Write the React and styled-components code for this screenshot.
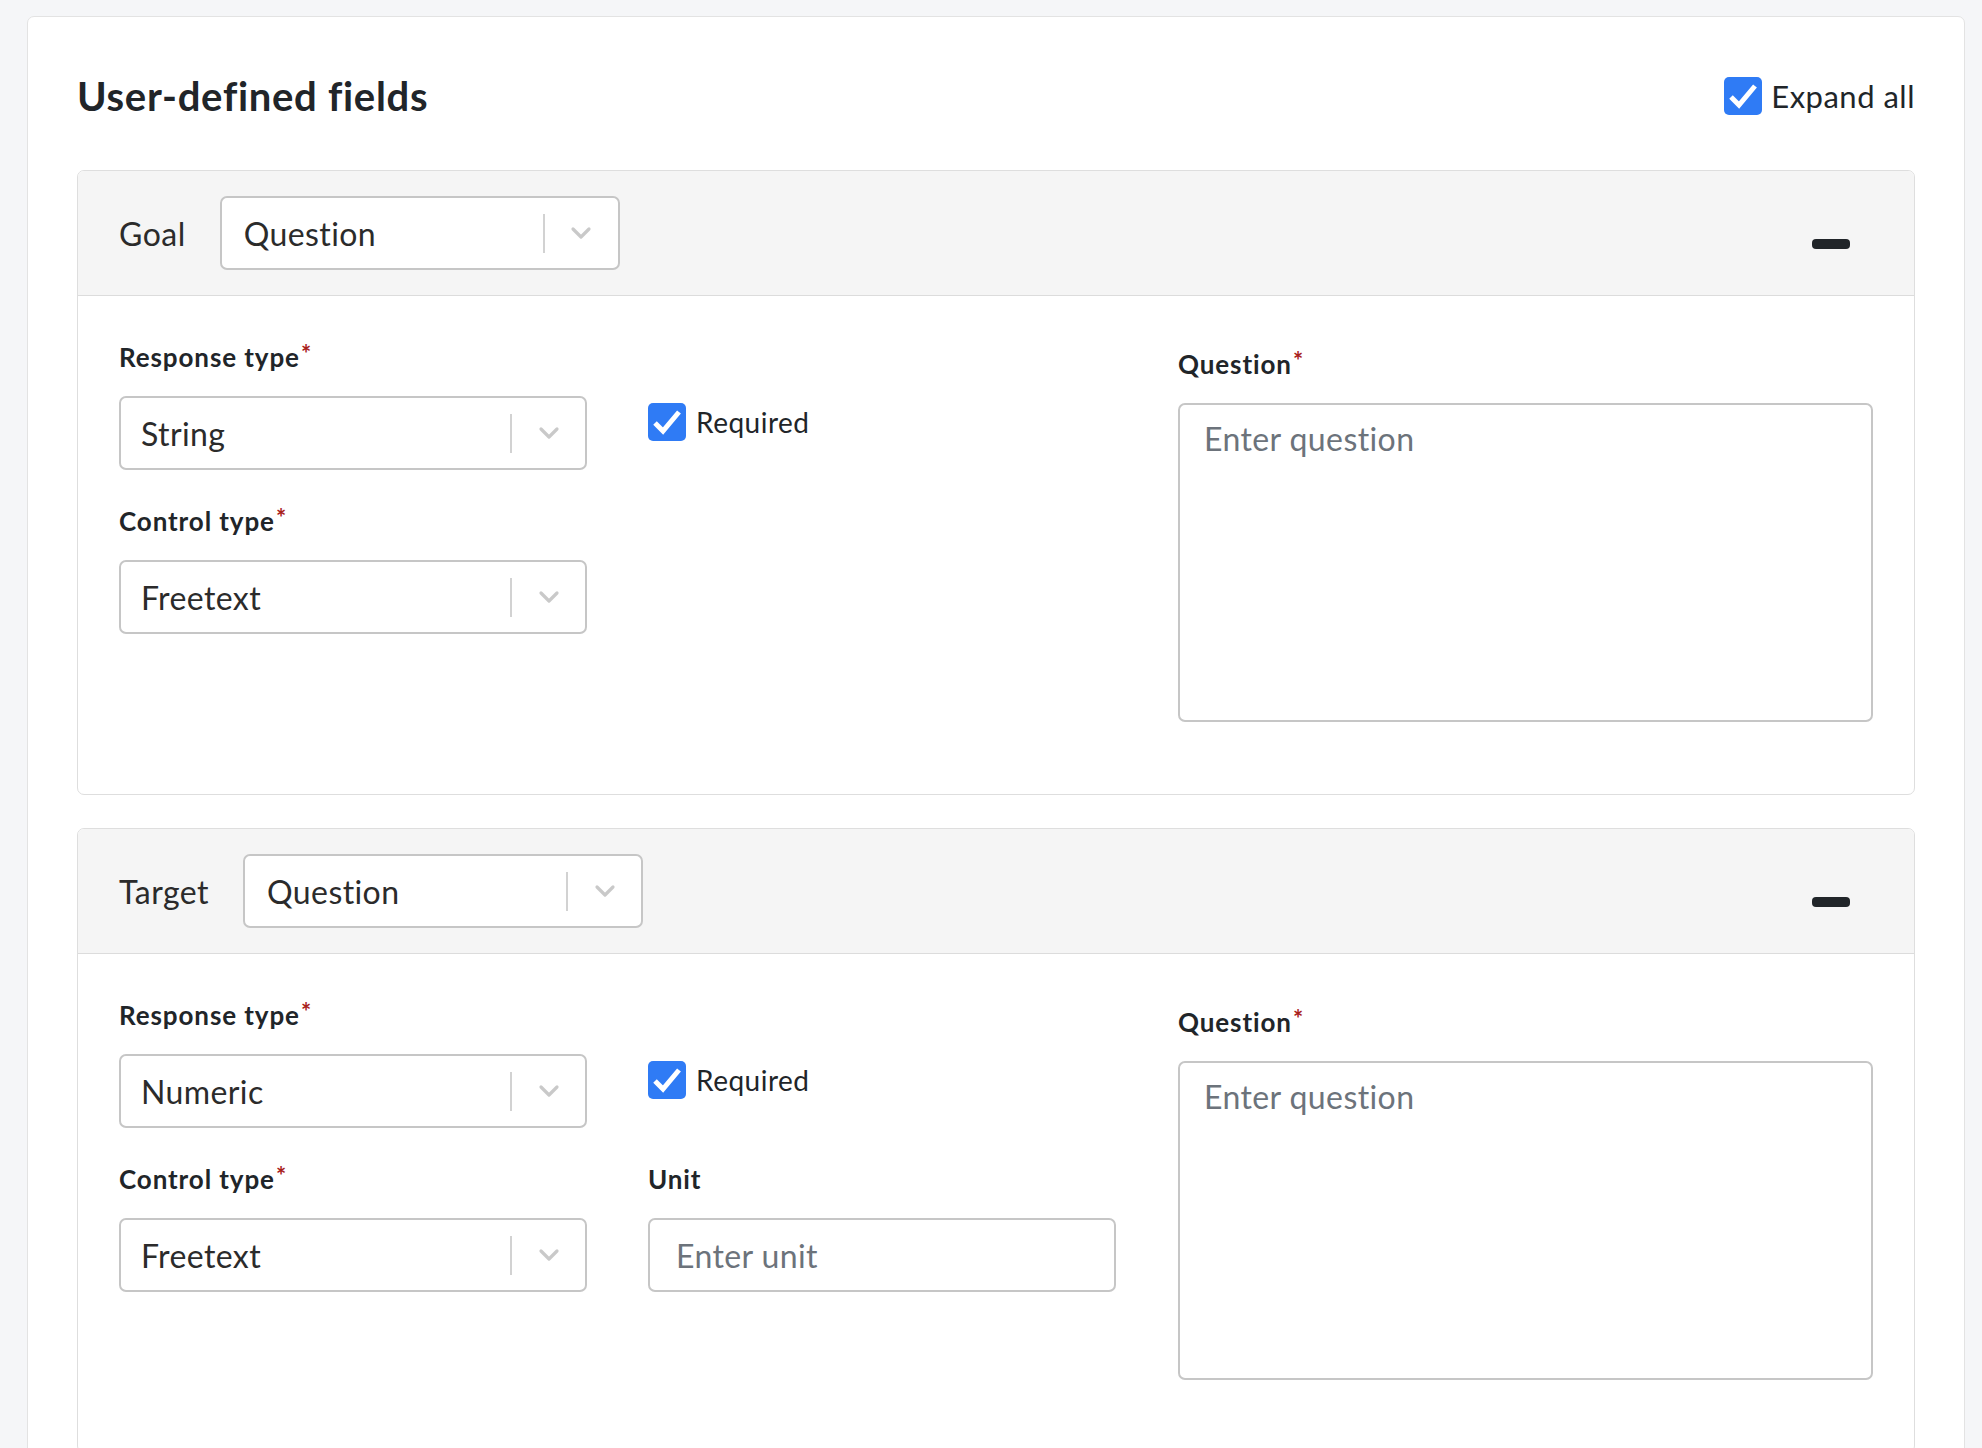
import React from "react";
import styled, { createGlobalStyle } from "styled-components";

const GlobalStyle = createGlobalStyle`
    html, body {
        margin: 0;
        padding: 0;
        background: #f5f6f8;
        font-family: Lato, "Liberation Sans", sans-serif;
        color: #212529;
    }
    * { box-sizing: border-box; }
`;

const Page = styled.div`
    padding: 16px 17px 0 27px;
    height: 1448px;
    overflow: hidden;
`;

const Card = styled.div`
    background: #fff;
    border: 1px solid #e3e3e3;
    border-radius: 7px;
    padding: 55px 49px 40px 49px;
    min-height: 1500px;
`;

const TopBar = styled.div`
    display: flex;
    align-items: center;
    justify-content: space-between;
    margin-bottom: 50px;
`;

const Title = styled.h1`
    margin: 0;
    font-size: 40px;
    line-height: 48px;
    font-weight: 700;
    color: #212529;
    letter-spacing: 0.7px;
`;

const CheckRow = styled.label`
    display: flex;
    align-items: center;
    gap: ${(p) => p.gap || 10}px;
    font-size: ${(p) => p.size || 28}px;
    letter-spacing: 0.5px;
    color: #212529;
    margin-right: ${(p) => p.right || 0}px;
    margin-top: ${(p) => p.top || 0}px;
`;

const Box = styled.span`
    display: inline-flex;
    width: 38px;
    height: 38px;
    border-radius: 5px;
    background: #2f7bf5;
    flex-shrink: 0;
`;

const Section = styled.div`
    border: 1px solid #dedede;
    border-radius: 7px;
    overflow: hidden;
    margin-bottom: 33px;
`;

const SectionHead = styled.div`
    display: flex;
    align-items: center;
    gap: 34px;
    background: #f5f5f5;
    border-bottom: 1px solid #dcdcdc;
    padding: 25px 64px 25px 41px;
`;

const HeadLabel = styled.span`
    font-size: 32px;
    letter-spacing: 0.5px;
    color: #2b2b2b;
`;

const Minus = styled.span`
    margin-left: auto;
    margin-top: 21px;
    width: 38px;
    height: 10px;
    border-radius: 4px;
    background: #212529;
`;

const SelectBox = styled.div`
    display: flex;
    align-items: center;
    width: ${(p) => p.width || 468}px;
    height: 74px;
    background: #fff;
    border: 2px solid #c6c6c6;
    border-radius: 7px;
    padding-left: ${(p) => p.pad || 20}px;
    font-size: 32px;
    letter-spacing: 0.4px;
    color: #2b2b2b;
`;

const SelectValue = styled.span`
    flex: 1;
`;

const Separator = styled.span`
    width: 2px;
    height: 39px;
    background: #d2d2d2;
`;

const ChevronWrap = styled.span`
    width: 73px;
    display: flex;
    justify-content: center;
`;

const SectionBody = styled.div`
    display: flex;
    padding: 46px 41px 72px 41px;
`;

const LeftGrid = styled.div`
    display: grid;
    grid-template-columns: 468px 468px;
    column-gap: 61px;
    row-gap: 36px;
    align-content: start;
`;

const RightCol = styled.div`
    flex: 1;
    margin-left: 62px;
    padding-top: 7px;
`;

const Field = styled.div`
    display: flex;
    flex-direction: column;
`;

const Label = styled.div`
    font-size: 26px;
    line-height: 30px;
    font-weight: 700;
    letter-spacing: 0.9px;
    color: #212529;
    margin-bottom: 24px;
`;

const Star = styled.span`
    color: #a8201a;
    font-size: 24px;
    vertical-align: top;
    line-height: 24px;
    margin-left: 1px;
`;

const TextInput = styled.div`
    height: 74px;
    border: 2px solid #c6c6c6;
    border-radius: 7px;
    padding-left: 26px;
    display: flex;
    align-items: center;
    font-size: 32px;
    letter-spacing: 0.4px;
    color: #6c737b;
`;

const TextArea = styled.div`
    height: 319px;
    border: 2px solid #c6c6c6;
    border-radius: 7px;
    padding: 16px 24px;
    font-size: 32px;
    letter-spacing: 0.4px;
    line-height: 36px;
    color: #6c737b;
`;

const Chevron = () => (
    <svg width="22" height="14" viewBox="0 0 22 14">
        <polyline points="3,3 11,11 19,3" fill="none" stroke="#c9c9c9" strokeWidth="3.2" strokeLinejoin="round" strokeLinecap="round" />
    </svg>
);

const Checkbox = (props) => (
    <CheckRow gap={props.gap} size={props.size} top={props.top} right={props.right}>
        <Box>
            <svg width="38" height="38" viewBox="0 0 38 38">
                <polyline points="7,20 15,28 31,9" fill="none" stroke="#fff" strokeWidth="5" />
            </svg>
        </Box>
        {props.label}
    </CheckRow>
);

const Select = (props) => (
    <SelectBox width={props.width} pad={props.pad}>
        <SelectValue>{props.value}</SelectValue>
        <Separator />
        <ChevronWrap><Chevron /></ChevronWrap>
    </SelectBox>
);

const FieldLabel = ({ children, required }) => (
    <Label>
        {children}
        {required && <Star>*</Star>}
    </Label>
);

const FieldSection = (props) => (
    <Section>
        <SectionHead>
            <HeadLabel>{props.name}</HeadLabel>
            <Select value="Question" width={400} pad={22} />
            <Minus />
        </SectionHead>
        <SectionBody>
            <LeftGrid>
                <Field>
                    <FieldLabel required>Response type</FieldLabel>
                    <Select value={props.response} />
                </Field>
                <Field>
                    <Checkbox label="Required" top={61} />
                </Field>
                <Field>
                    <FieldLabel required>Control type</FieldLabel>
                    <Select value="Freetext" />
                </Field>
                {props.unit ? (
                    <Field>
                        <FieldLabel>Unit</FieldLabel>
                        <TextInput>Enter unit</TextInput>
                    </Field>
                ) : <div />}
            </LeftGrid>
            <RightCol>
                <FieldLabel required>Question</FieldLabel>
                <TextArea>Enter question</TextArea>
            </RightCol>
        </SectionBody>
    </Section>
);

const App = () => {
    return (
        <Page>
            <GlobalStyle />
            <Card>
                <TopBar>
                    <Title>User-defined fields</Title>
                    <Checkbox label="Expand all" size={31} gap={9} />
                </TopBar>
                <FieldSection name="Goal" response="String" />
                <FieldSection name="Target" response="Numeric" unit />
            </Card>
        </Page>
    );
};

export default App;
